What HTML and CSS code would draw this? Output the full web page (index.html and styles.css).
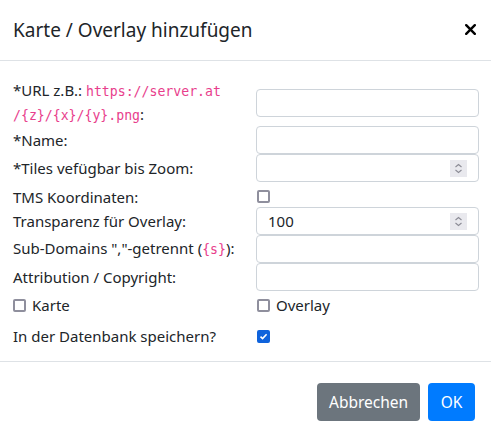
FILE: index.html
```html
<!DOCTYPE html>
<html lang="de">
<head>
<meta charset="utf-8">
<title>Karte / Overlay hinzufügen</title>
<link rel="stylesheet" href="styles.css">
</head>
<body>
<div class="modal">
  <div class="modal-header">
    <h5 class="modal-title">Karte / Overlay hinzufügen</h5>
    <button class="close" type="button" aria-label="Close">
      <svg width="11" height="11" viewBox="0 0 11 11"><path d="M1.2 1.2 L9.8 9.8 M9.8 1.2 L1.2 9.8" stroke="#000" stroke-width="2.4" stroke-linecap="round"/></svg>
    </button>
  </div>
  <div class="modal-body">
    <div class="row row-url">
      <label>*URL z.B.: <code>https://server.at<wbr>/{z}/{x}/{y}.png</code>:</label>
      <input class="form-control" type="text">
    </div>
    <div class="row">
      <label>*Name:</label>
      <input class="form-control" type="text">
    </div>
    <div class="row">
      <label>*Tiles vefügbar bis Zoom:</label>
      <div class="num">
        <input class="num-input" type="text">
        <span class="spin"><svg width="17" height="17" viewBox="0 0 17 17"><path d="M5.5 7 L8.5 4.5 L11.5 7 M5.5 10 L8.5 12.5 L11.5 10" fill="none" stroke="#8c8c96" stroke-width="1.1"/></svg></span>
      </div>
    </div>
    <div class="row row-check">
      <label>TMS Koordinaten:</label>
      <span class="cb-cell"><input class="cb" type="checkbox"></span>
    </div>
    <div class="row">
      <label>Transparenz für Overlay:</label>
      <div class="num">
        <input class="num-input" type="text" value="100">
        <span class="spin"><svg width="17" height="17" viewBox="0 0 17 17"><path d="M5.5 7 L8.5 4.5 L11.5 7 M5.5 10 L8.5 12.5 L11.5 10" fill="none" stroke="#8c8c96" stroke-width="1.1"/></svg></span>
      </div>
    </div>
    <div class="row">
      <label>Sub-Domains ","-getrennt (<code>{s}</code>):</label>
      <input class="form-control" type="text">
    </div>
    <div class="row">
      <label>Attribution / Copyright:</label>
      <input class="form-control" type="text">
    </div>
    <div class="row row-types">
      <label class="cb-label"><input class="cb" type="checkbox"> Karte</label>
      <label class="cb-label"><input class="cb" type="checkbox"> Overlay</label>
    </div>
    <div class="row row-db">
      <label>In der Datenbank speichern?</label>
      <span class="cb-cell"><input class="cb" type="checkbox" checked></span>
    </div>
  </div>
  <div class="modal-footer">
    <button class="btn btn-secondary" type="button">Abbrechen</button>
    <button class="btn btn-primary" type="button">OK</button>
  </div>
</div>
</body>
</html>
```
FILE: styles.css
```css
* { box-sizing: border-box; }
body {
  margin: 0;
  background: #fff;
  color: #212529;
  font-family: "Noto Sans", "Open Sans", sans-serif;
  font-size: 15px;
}
.modal { width: 491px; }
.modal-header {
  height: 61px;
  display: flex;
  align-items: center;
  justify-content: space-between;
  padding: 0 15px 0 13px;
  border-bottom: 1px solid #dee2e6;
}
.modal-title {
  margin: 0;
  font-size: 19px;
  font-weight: 400;
  line-height: 24px;
}
.close {
  border: 0;
  background: none;
  padding: 0;
  width: 11px;
  height: 11px;
  display: flex;
  margin-top: -2px;
}
.modal-body {
  padding: 18px 12px 8px 13px;
}
.row {
  display: grid;
  grid-template-columns: 243px 223px;
  align-items: center;
  min-height: 28px;
}
.row label { line-height: 23px; }
.row-url { height: 46px; margin-bottom: 1px; }
code {
  font-family: "DejaVu Sans Mono", "Liberation Mono", monospace;
  font-size: 13.2px;
  color: #e83e8c;
}
.form-control, .num {
  height: 28px;
  border: 1px solid #ced4da;
  border-radius: 4px;
  width: 223px;
}
.form-control {
  padding: 0 11px;
  font: inherit;
  color: #212529;
}
.num {
  display: flex;
  align-items: center;
  padding: 0 11px;
}
.num-input {
  flex: 1;
  min-width: 0;
  border: 0;
  padding: 0;
  font: inherit;
  color: #212529;
  background: transparent;
  outline: none;
}
.spin {
  width: 17px;
  height: 17px;
  background: #e9e9ee;
  display: flex;
}
.row-check { min-height: 25px; height: 25px; padding-top: 4px; }
.row-check label { line-height: 20px; }
.cb-cell { display: flex; align-items: center; }
.cb {
  appearance: none;
  -webkit-appearance: none;
  margin: 0 0 0 1px;
  width: 13px;
  height: 13px;
  border: 2px solid #8f8f9d;
  border-radius: 2px;
  background: #fff;
  flex: none;
}
.cb:checked {
  background: #0f63dc;
  border-color: #0f63dc;
  background-image: url("data:image/svg+xml,%3Csvg xmlns='http://www.w3.org/2000/svg' viewBox='0 0 9 9'%3E%3Cpath d='M1.5 4.6 L3.6 6.6 L7.6 2.2' fill='none' stroke='%23fff' stroke-width='1.6'/%3E%3C/svg%3E");
  background-size: 9px 9px;
  background-position: center;
  background-repeat: no-repeat;
}
.cb-label {
  display: flex;
  align-items: center;
  gap: 6px;
}
.cb-label .cb { margin-left: 0; }
.row-types { height: 28px; }
.row-types .cb-label:last-child .cb { margin-left: 1px; }
.row-db { height: 34px; }
.modal-footer {
  border-top: 1px solid #dee2e6;
  display: flex;
  justify-content: flex-end;
  gap: 8px;
  padding: 21px 16px 13px;
}
.btn {
  height: 38px;
  border: 0;
  border-radius: 4px;
  color: #fff;
  font: inherit;
  font-size: 15.5px;
  padding: 0 12px;
}
.btn-secondary { background: #6c757d; width: 103px; }
.btn-primary { background: #007bff; width: 47px; }
```
